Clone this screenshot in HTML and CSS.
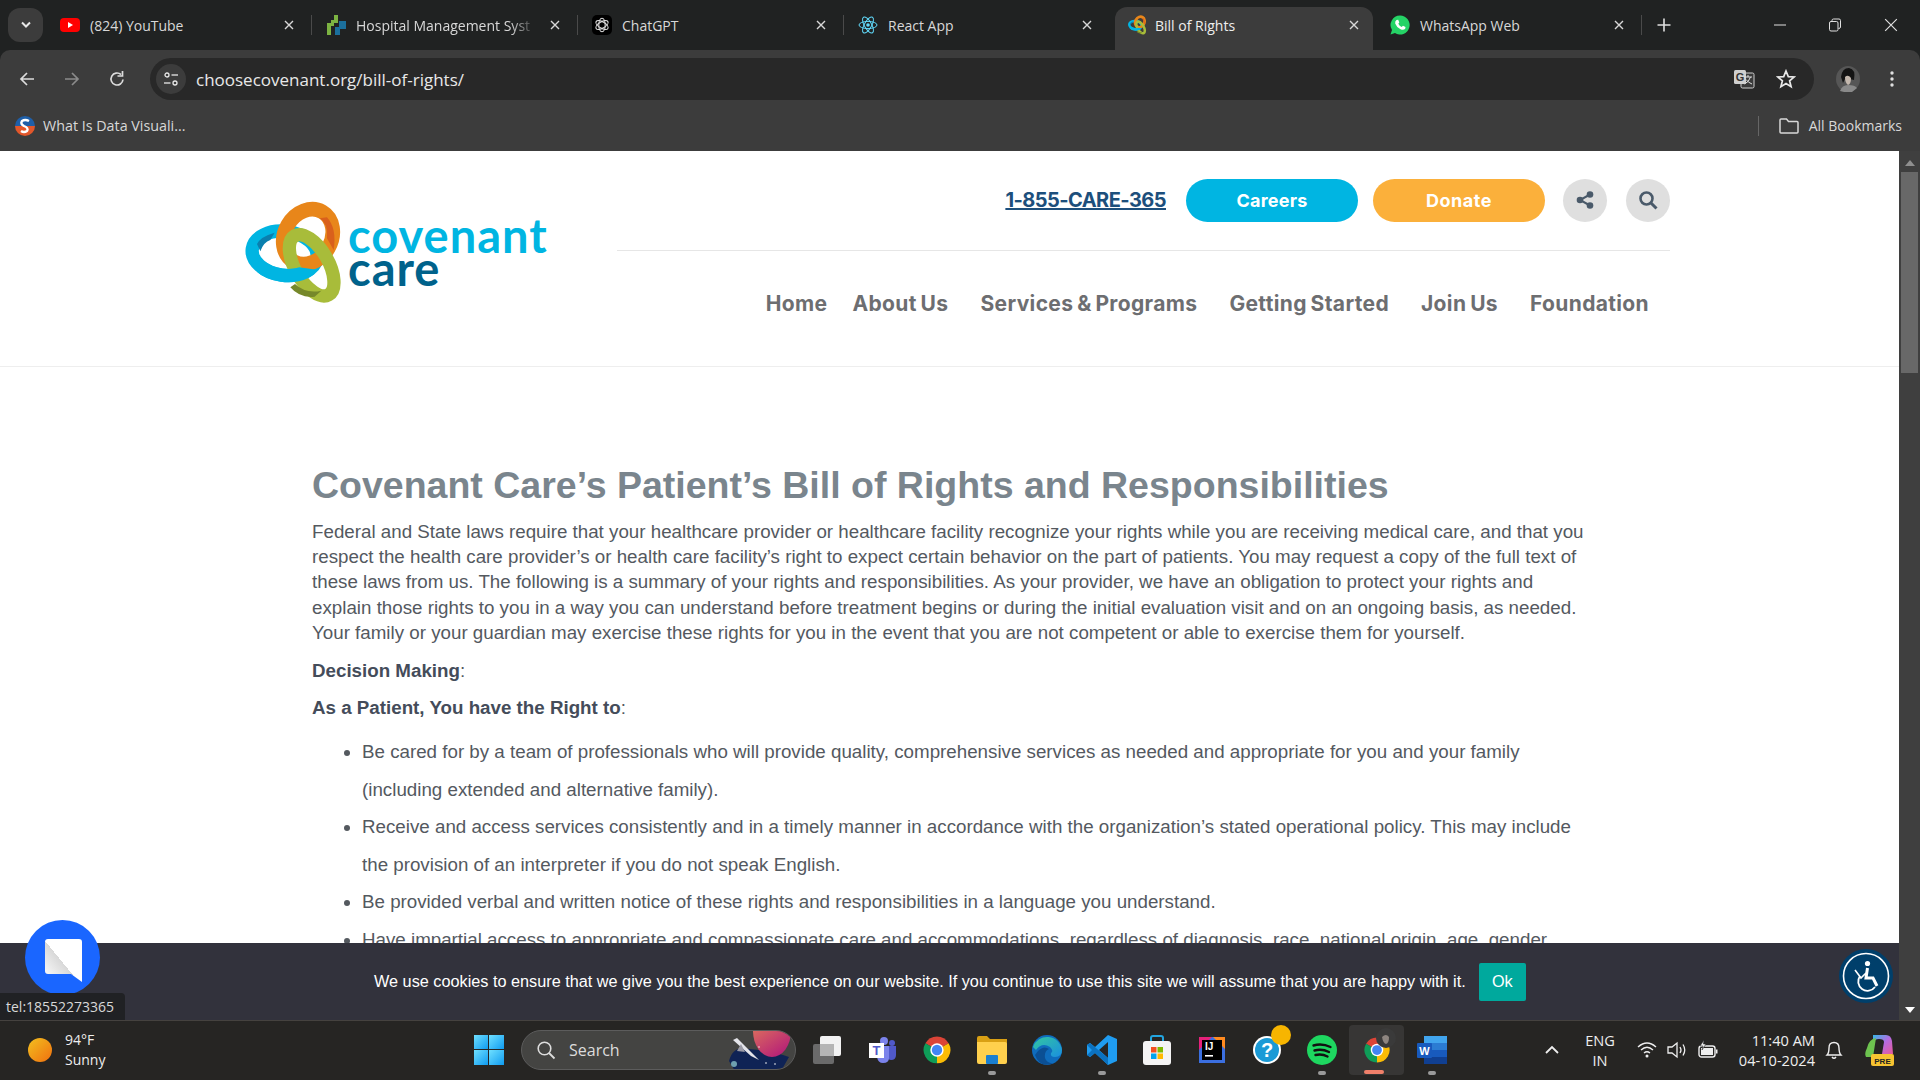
FILE: index.html
```html
<!DOCTYPE html>
<html>
<head>
    <meta charset="utf-8">
    <title>Bill of Rights</title>
    <link rel="stylesheet" href="styles.css">
</head>
<body>

<svg class="defs" width="0" height="0">
    <defs>
        <clipPath id="blue-over"><rect x="120" y="285" width="172" height="80"/></clipPath>
    </defs>
    <symbol id="rings" viewBox="70 90 300 315">
        <ellipse cx="195" cy="250" rx="98" ry="66" transform="rotate(8 195 250)" fill="none" stroke="#00b5e2" stroke-width="40"/>
        <path d="M112 222 Q122 200 165 188 L152 210 Q132 216 122 244Z" fill="#0a7fae"/>
        <ellipse cx="265" cy="200" rx="70" ry="86" transform="rotate(30 265 200)" fill="none" stroke="#e8861a" stroke-width="44"/>
        <path d="M300 145 Q326 160 322 205 L342 240 Q352 175 322 142Z" fill="#d9601c"/>
        <ellipse cx="276" cy="286" rx="50" ry="102" transform="rotate(-30 276 286)" fill="none" stroke="#a8bc3a" stroke-width="40"/>
        <path d="M226 342 Q258 372 305 362 L285 380 Q240 385 212 352Z" fill="#76882a"/>
        <ellipse cx="195" cy="250" rx="98" ry="66" transform="rotate(8 195 250)" fill="none" stroke="#00b5e2" stroke-width="40" clip-path="url(#blue-over)"/>
    </symbol>
    <symbol id="chrome-logo" viewBox="0 0 24 24">
        <path d="M12 12 L3.3 7 A10 10 0 0 1 20.7 7Z" fill="#db4437"/>
        <path d="M12 12 L20.7 7 A10 10 0 0 1 12 22Z" fill="#fbbc05"/>
        <path d="M12 12 L12 22 A10 10 0 0 1 3.3 7Z" fill="#0f9d58"/>
        <circle cx="12" cy="12" r="5" fill="#fff"/>
        <circle cx="12" cy="12" r="3.9" fill="#4285f4"/>
    </symbol>
    <symbol id="close-x" viewBox="0 0 12 12">
        <path d="M2 2 L10 10 M10 2 L2 10" stroke="#d8d8d8" stroke-width="1.4" fill="none"/>
    </symbol>
</svg>

<div class="browser-top">
    <div class="tabstrip">
        <div class="tab-list-btn">
            <svg width="12" height="8" viewBox="0 0 12 8"><path d="M2 1.5 L6 5.5 L10 1.5" stroke="#e8e8e8" stroke-width="2" fill="none"/></svg>
        </div>
        <div class="tab sep">
            <svg class="favicon" viewBox="0 0 20 20"><rect y="3" width="20" height="14" rx="4" fill="#f00"/><path d="M8 7 L13 10 L8 13Z" fill="#fff"/></svg>
            <span class="tab-title">(824) YouTube</span>
            <svg class="tab-close"><use href="#close-x"/></svg>
        </div>
        <div class="tab sep">
            <svg class="favicon" viewBox="0 0 20 20"><path d="M5 5 H8 V0 H12 V8 H8 V11 H5 V20 H1 V8 H5Z" fill="#7cb342"/><path d="M13 6 H20 V14 H14 V20 H9 V12 H13Z" fill="#1b6f9c"/></svg>
            <span class="tab-title fade">Hospital Management Syst</span>
            <svg class="tab-close"><use href="#close-x"/></svg>
        </div>
        <div class="tab sep">
            <svg class="favicon" viewBox="0 0 20 20"><rect width="20" height="20" rx="5" fill="#000"/><g fill="none" stroke="#ddd" stroke-width="1.1"><ellipse cx="10" cy="10" rx="3.2" ry="6.8"/><ellipse cx="10" cy="10" rx="3.2" ry="6.8" transform="rotate(60 10 10)"/><ellipse cx="10" cy="10" rx="3.2" ry="6.8" transform="rotate(120 10 10)"/></g></svg>
            <span class="tab-title">ChatGPT</span>
            <svg class="tab-close"><use href="#close-x"/></svg>
        </div>
        <div class="tab">
            <svg class="favicon" viewBox="0 0 20 20"><g fill="none" stroke="#61dafb" stroke-width="1"><ellipse cx="10" cy="10" rx="9" ry="3.6"/><ellipse cx="10" cy="10" rx="9" ry="3.6" transform="rotate(60 10 10)"/><ellipse cx="10" cy="10" rx="9" ry="3.6" transform="rotate(120 10 10)"/></g><circle cx="10" cy="10" r="1.8" fill="#61dafb"/></svg>
            <span class="tab-title">React App</span>
            <svg class="tab-close"><use href="#close-x"/></svg>
        </div>
        <div class="tab active">
            <svg class="favicon"><use href="#rings"/></svg>
            <span class="tab-title">Bill of Rights</span>
            <svg class="tab-close"><use href="#close-x"/></svg>
        </div>
        <div class="tab sep">
            <svg class="favicon" viewBox="0 0 20 20"><path d="M10 0.5 A9.5 9.5 0 1 1 5 18 L0.5 19.5 L2 15 A9.5 9.5 0 0 1 10 0.5Z" fill="#25d366"/><path d="M6.5 5 L8.2 4.8 L9.3 7.5 L8.3 8.8 Q9.5 11 11.6 12 L13 10.8 L15.5 12 L15.2 13.8 Q13.5 15.6 10.5 14.2 Q6.6 12.4 5.2 8.4 Q4.8 6.4 6.5 5Z" fill="#fff"/></svg>
            <span class="tab-title">WhatsApp Web</span>
            <svg class="tab-close"><use href="#close-x"/></svg>
        </div>
        <div class="new-tab">
            <svg width="14" height="14" viewBox="0 0 14 14"><path d="M7 0.5 V13.5 M0.5 7 H13.5" stroke="#e0e0e0" stroke-width="1.6"/></svg>
        </div>
        <div class="win-btns">
            <svg width="12" height="12" viewBox="0 0 12 12"><path d="M0 6 H12" stroke="#e0e0e0"/></svg>
            <svg width="14" height="14" viewBox="0 0 14 14"><rect x="1.5" y="3.5" width="8.5" height="9.5" rx="1.5" fill="none" stroke="#e0e0e0"/><path d="M4 3.5 V2.5 Q4 1 5.5 1 H11 Q12.5 1 12.5 2.5 V9 Q12.5 10.5 10.5 10.5" fill="none" stroke="#e0e0e0"/></svg>
            <svg width="14" height="14" viewBox="0 0 12 12"><path d="M1 1 L11 11 M11 1 L1 11" stroke="#e0e0e0"/></svg>
        </div>
    </div>

    <div class="toolbar">
        <div class="nav-btns">
            <svg width="18" height="18" viewBox="0 0 18 18"><path d="M16 9 H3 M9 3 L3 9 L9 15" stroke="#dcdcdc" stroke-width="1.7" fill="none"/></svg>
            <svg width="18" height="18" viewBox="0 0 18 18"><path d="M2 9 H15 M9 3 L15 9 L9 15" stroke="#8b8b8b" stroke-width="1.7" fill="none"/></svg>
            <svg width="18" height="18" viewBox="0 0 18 18"><path d="M15 9.5 A6 6 0 1 1 13 4.5" stroke="#dcdcdc" stroke-width="1.7" fill="none"/><path d="M14.5 1 V6 H9.5" stroke="#dcdcdc" stroke-width="1.7" fill="none"/></svg>
        </div>
        <div class="omnibox">
            <div class="site-info">
                <svg width="16" height="16" viewBox="0 0 16 16"><g stroke="#e8e8e8" stroke-width="1.3" fill="none"><circle cx="4" cy="4" r="2"/><path d="M8.5 4 H15"/><circle cx="12" cy="12" r="2"/><path d="M1 12 H7.5"/></g></svg>
            </div>
            <span class="url">choosecovenant.org/bill-of-rights/</span>
            <svg class="omni-icon" width="22" height="22" viewBox="0 0 22 22"><rect x="8" y="5" width="13" height="15" rx="1.5" fill="#3a3a3a" stroke="#cfcfcf"/><rect x="1" y="2" width="12" height="14" rx="1.5" fill="#cfcfcf"/><text x="7" y="13" class="g-letter">G</text><path d="M11 9 H19 M15 7 V9 M17.5 9 Q16 14 11.5 16 M13 11.5 Q15 14.5 19 16" stroke="#e0e0e0" fill="none"/></svg>
            <svg class="omni-icon" width="20" height="20" viewBox="0 0 20 20"><path d="M10 2 L12.3 7.6 L18.2 8 L13.6 11.8 L15.1 17.7 L10 14.5 L4.9 17.7 L6.4 11.8 L1.8 8 L7.7 7.6Z" fill="none" stroke="#e8e8e8" stroke-width="1.7"/></svg>
        </div>
        <svg class="avatar" viewBox="0 0 24 26"><ellipse cx="12" cy="13" rx="12" ry="13" fill="#565656"/><path d="M5 11 Q6 2 13 2 Q20 3 18 14 L14 13 Q11 9 9 13 L7 17Z" fill="#141414"/><path d="M9 11 Q12 8 15 12 Q15 18 12 19 Q9 17 9 11Z" fill="#c4b8ae"/><path d="M4 25 Q6 19 12 19 Q19 19 21 22 L16 26 H8Z" fill="#8a8a8a"/></svg>
        <svg class="menu-dots" width="4" height="18" viewBox="0 0 4 18"><circle cx="2" cy="3" r="1.7" fill="#e0e0e0"/><circle cx="2" cy="9" r="1.7" fill="#e0e0e0"/><circle cx="2" cy="15" r="1.7" fill="#e0e0e0"/></svg>
    </div>

    <div class="bookmarks">
        <svg class="favicon" viewBox="0 0 20 20"><path d="M10 0 A10 10 0 0 1 20 10 H0 A10 10 0 0 1 10 0Z" fill="#1f5fa8"/><path d="M0 10 H20 A10 10 0 0 1 0 10Z" fill="#e2572b"/><path d="M14 5 Q10 3 7 5 Q5 8 9 10 Q14 12 12 15 Q9 17 6 15" fill="none" stroke="#fff" stroke-width="2.4"/></svg>
        <span class="bm-title bm-first">What Is Data Visuali...</span>
        <div class="bm-right">
            <svg width="20" height="16" viewBox="0 0 20 16"><path d="M1 14 V2 Q1 1 2 1 H7.5 L9.5 3.5 H18 Q19 3.5 19 4.5 V14 Q19 15 18 15 H2 Q1 15 1 14Z" fill="none" stroke="#d8d8d8" stroke-width="1.5"/></svg>
            <span class="bm-title">All Bookmarks</span>
        </div>
    </div>
</div>

<div class="viewport">
    <div class="page">
        <header class="site-header">
            <div class="logo">
                <svg class="logo-rings"><use href="#rings"/></svg>
                <div class="logo-text">
                    <div class="logo-covenant">covenant</div>
                    <div class="logo-care">care</div>
                </div>
            </div>
            <div class="header-right">
                <div class="header-actions">
                    <a class="phone">1-855-CARE-365</a>
                    <a class="pill careers">Careers</a>
                    <a class="pill donate">Donate</a>
                    <div class="round-btn">
                        <svg width="20" height="20" viewBox="0 0 20 20"><g fill="#4a5a6a"><circle cx="15" cy="4.5" r="3.3"/><circle cx="15" cy="15.5" r="3.3"/><circle cx="5" cy="10" r="3.3"/></g><path d="M15 4.5 L5 10 L15 15.5" stroke="#4a5a6a" stroke-width="2" fill="none"/></svg>
                    </div>
                    <div class="round-btn">
                        <svg width="20" height="20" viewBox="0 0 20 20"><circle cx="8.5" cy="8.5" r="6" fill="none" stroke="#4a5a6a" stroke-width="2.6"/><path d="M13 13 L18.5 18.5" stroke="#4a5a6a" stroke-width="3"/></svg>
                    </div>
                </div>
                <nav class="main-nav">
                    <a class="nav-home">Home</a>
                    <a class="nav-about">About Us</a>
                    <a class="nav-services">Services &amp; Programs</a>
                    <a class="nav-started">Getting Started</a>
                    <a class="nav-join">Join Us</a>
                    <a>Foundation</a>
                </nav>
            </div>
        </header>

        <article class="rights">
            <h1>Covenant Care’s Patient’s Bill of Rights and Responsibilities</h1>
            <p>Federal and State laws require that your healthcare provider or healthcare facility recognize your rights while you are receiving medical care, and that you respect the health care provider’s or health care facility’s right to expect certain behavior on the part of patients. You may request a copy of the full text of these laws from us. The following is a summary of your rights and responsibilities. As your provider, we have an obligation to protect your rights and explain those rights to you in a way you can understand before treatment begins or during the initial evaluation visit and on an ongoing basis, as needed. Your family or your guardian may exercise these rights for you in the event that you are not competent or able to exercise them for yourself.</p>
            <p><strong>Decision Making</strong>:</p>
            <p><strong>As a Patient, You have the Right to</strong>:</p>
            <ul>
                <li>Be cared for by a team of professionals who will provide quality, comprehensive services as needed and appropriate for you and your family (including extended and alternative family).</li>
                <li>Receive and access services consistently and in a timely manner in accordance with the organization’s stated operational policy. This may include the provision of an interpreter if you do not speak English.</li>
                <li>Be provided verbal and written notice of these rights and responsibilities in a language you understand.</li>
                <li>Have impartial access to appropriate and compassionate care and accommodations, regardless of diagnosis, race, national origin, age, gender</li>
            </ul>
        </article>
    </div>
    <div class="scrollbar">
        <svg width="10" height="6" viewBox="0 0 10 6"><path d="M5 0 L10 6 H0Z" fill="#8f8f8f"/></svg>
        <div class="thumb"></div>
        <svg class="scroll-down" width="10" height="6" viewBox="0 0 10 6"><path d="M0 0 H10 L5 6Z" fill="#fff"/></svg>
    </div>

    <div class="cookie-bar">
        <span>We use cookies to ensure that we give you the best experience on our website. If you continue to use this site we will assume that you are happy with it.</span>
        <a class="cookie-ok">Ok</a>
    </div>
    <div class="a11y-btn">
        <svg width="54" height="54" viewBox="0 0 54 54"><circle cx="27" cy="27" r="27" fill="#003f6b"/><circle cx="27" cy="27" r="22.5" fill="none" stroke="#fff" stroke-width="1.6"/><circle cx="28.5" cy="14.5" r="2.6" fill="#fff"/><path d="M28.5 19 L27 29 H34 L38 37" fill="none" stroke="#fff" stroke-width="3"/><path d="M21 27 A9 9 0 1 0 36 38" fill="none" stroke="#fff" stroke-width="1.8"/><path d="M16 21 L22 29 L27 24" fill="none" stroke="#fff" stroke-width="1.6"/></svg>
    </div>
    <div class="chat-btn">
        <svg width="37" height="43" viewBox="0 0 37 43"><defs><linearGradient id="bubble" gradientUnits="userSpaceOnUse" x1="0" y1="35" x2="32.4" y2="8.4"><stop offset="0" stop-color="#f8f8f8"/><stop offset=".5" stop-color="#d8d8d8"/><stop offset=".5" stop-color="#fff"/><stop offset="1" stop-color="#fff"/></linearGradient></defs><path d="M3 0 H34 Q37 0 37 3 V43 L26 35 H3 Q0 35 0 32 V3 Q0 0 3 0Z" fill="url(#bubble)"/></svg>
    </div>
    <div class="status-url">tel:18552273365</div>
</div>

<div class="taskbar">
    <div class="weather">
        <span class="sun"></span>
        <div class="weather-text"><div>94°F</div><div>Sunny</div></div>
    </div>
    <div class="task-center">
        <div class="task-item">
            <div class="win-logo"><i></i><i></i><i></i><i></i></div>
        </div>
        <div class="search-pill">
            <svg width="20" height="20" viewBox="0 0 20 20"><circle cx="8.5" cy="8.5" r="6.3" fill="none" stroke="#ddd" stroke-width="1.6"/><path d="M13 13 L18.5 18.5" stroke="#ddd" stroke-width="1.8"/></svg>
            <span>Search</span>
            <svg class="search-art" width="66" height="40" viewBox="0 0 66 40"><defs><linearGradient id="planet" x1="0" y1="0" x2="1" y2="1"><stop offset="0" stop-color="#d9685f"/><stop offset="1" stop-color="#b0127c"/></linearGradient></defs><path d="M0 30 Q4 14 20 18 Q44 20 60 26 L52 40 H6Z" fill="#0f2355"/><path d="M24 0 H62 A19 26 0 0 1 24 0Z" fill="url(#planet)"/><path d="M4 9 L8 7 L30 29 L22 25Z" fill="#e4e4ea"/><path d="M8 20 L16 21 L12 13Z" fill="#9a9aa6"/><circle cx="5" cy="33" r="3" fill="#6ea0b0"/><g fill="#fff"><circle cx="37" cy="32" r=".8"/><circle cx="46" cy="33" r=".8"/><circle cx="30" cy="16" r=".7"/></g></svg>
        </div>
        <div class="task-item">
            <svg width="30" height="30" viewBox="0 0 30 30"><rect x="1" y="9" width="21" height="20" rx="2" fill="#6a6a6a"/><rect x="8" y="1" width="21" height="20" rx="2" fill="#f2f2f2"/><rect x="8" y="9" width="14" height="12" fill="#b5b5b5"/></svg>
        </div>
        <div class="task-item">
            <svg width="28" height="28" viewBox="0 0 28 28"><circle cx="16" cy="5" r="4" fill="#7b83eb"/><circle cx="24" cy="7" r="3" fill="#5059c9"/><path d="M20 10 H28 V19 Q28 24 23 24 Q22 24 20 23Z" fill="#5059c9"/><path d="M9 10 H21 V22 Q21 27 15 27 Q10 27 9 21Z" fill="#7b83eb"/><rect x="1" y="7" width="15" height="15" fill="#fff"/><text x="8.5" y="19" class="teams-t">T</text></svg>
        </div>
        <div class="task-item">
            <svg width="32" height="32"><use href="#chrome-logo"/></svg>
        </div>
        <div class="task-item dot">
            <svg width="30" height="28" viewBox="0 0 30 28"><path d="M0 2 Q0 0 2 0 H10 L13 3 H30 V10 H0Z" fill="#d9a014"/><path d="M0 6 H28 Q30 6 30 8 V26 Q30 28 28 28 H2 Q0 28 0 26Z" fill="#ffd04d"/><rect x="9" y="19" width="12" height="9" rx="1" fill="#1a7fd0"/></svg>
        </div>
        <div class="task-item">
            <svg width="30" height="30" viewBox="0 0 30 30"><defs><linearGradient id="edge" x1="0" y1="0" x2="1" y2="1"><stop offset="0" stop-color="#33c6a0"/><stop offset="1" stop-color="#1a8fe0"/></linearGradient></defs><circle cx="15" cy="15" r="15" fill="#0f6cbd"/><path d="M1 12 A15 15 0 0 1 30 15 Q30 22 23 22 Q18 22 19 18 Q22 16 18 12 Q10 7 4 15Z" fill="url(#edge)"/><path d="M6 16 Q12 10 17 14 Q12 16 13 23 Q15 29 22 28 Q8 34 3 20Z" fill="#0b4f94"/></svg>
        </div>
        <div class="task-item dot">
            <svg width="30" height="30" viewBox="0 0 30 30"><path d="M21 0 L30 4 V26 L21 30 L8 18 L3 22 L0 20 V10 L3 8 L8 12Z" fill="#1f9cf0"/><path d="M21 7 L12 15 L21 23Z" fill="#262626"/><path d="M0 10 L3 8 L21 23 V30 L8 18 L3 22 L0 20 L5 15Z" fill="#0b72c0"/></svg>
        </div>
        <div class="task-item">
            <svg width="30" height="30" viewBox="0 0 30 30"><path d="M9 7 V3 Q9 1 11 1 H19 Q21 1 21 3 V7" fill="none" stroke="#22a5e0" stroke-width="2"/><rect x="1" y="6" width="28" height="24" rx="3" fill="#f4f4f4"/><rect x="9" y="12" width="5.5" height="5.5" fill="#f25022"/><rect x="15.5" y="12" width="5.5" height="5.5" fill="#7fba00"/><rect x="9" y="18.5" width="5.5" height="5.5" fill="#00a4ef"/><rect x="15.5" y="18.5" width="5.5" height="5.5" fill="#ffb900"/></svg>
        </div>
        <div class="task-item">
            <svg width="26" height="26" viewBox="0 0 26 26"><rect width="26" height="26" fill="#3b6fe0"/><path d="M0 0 H13 L0 13Z" fill="#e6217a"/><path d="M26 0 V12 L14 0Z" fill="#ff8a1f"/><rect x="3" y="3" width="20" height="20" fill="#000"/><text x="6" y="13" class="ij-text">IJ</text><rect x="6" y="18" width="8" height="1.6" fill="#fff"/></svg>
        </div>
        <div class="task-item help-item">
            <svg width="30" height="30" viewBox="0 0 30 30"><circle cx="15" cy="15" r="14" fill="#fff"/><circle cx="15" cy="15" r="12" fill="#1a9ad6"/><text x="15" y="22" class="help-q">?</text></svg>
            <span class="help-badge"></span>
        </div>
        <div class="task-item dot">
            <svg width="30" height="30" viewBox="0 0 30 30"><circle cx="15" cy="15" r="15" fill="#1ed760"/><path d="M6.5 10.5 Q15 8 23.5 12 M7.5 15.5 Q15 13.5 22 17 M8.5 20 Q15 18.5 20.5 21.5" fill="none" stroke="#111" stroke-width="2.4" stroke-linecap="round"/></svg>
        </div>
        <div class="task-item active-app">
            <svg width="30" height="30"><use href="#chrome-logo"/></svg>
            <svg class="app-avatar" width="20" height="20" viewBox="0 0 20 20"><circle cx="10" cy="10" r="10" fill="#3a3a3a"/><path d="M6 9 Q10 5 13 9 Q13 15 10 16 Q7 15 6 9Z" fill="#8d8580"/></svg>
        </div>
        <div class="task-item dot">
            <svg width="30" height="30" viewBox="0 0 30 30"><rect x="7" y="1" width="23" height="7" fill="#41a5ee"/><rect x="7" y="8" width="23" height="7" fill="#2b7cd3"/><rect x="7" y="15" width="23" height="7" fill="#185abd"/><rect x="7" y="22" width="23" height="7" fill="#103f91"/><rect x="0" y="8" width="15" height="15" rx="1" fill="#185abd"/><text x="7.5" y="20" class="word-w">W</text></svg>
        </div>
    </div>
    <div class="tray">
        <svg class="tray-chevron" width="14" height="9" viewBox="0 0 14 9"><path d="M1 8 L7 2 L13 8" fill="none" stroke="#eee" stroke-width="1.8"/></svg>
        <div class="lang"><div>ENG</div><div>IN</div></div>
        <svg width="20" height="18" viewBox="0 0 20 18"><g fill="none" stroke="#eee" stroke-width="1.4"><path d="M1 6 Q10 -2 19 6"/><path d="M4 9 Q10 3.5 16 9"/><path d="M7 12 Q10 9.5 13 12"/></g><circle cx="10" cy="15" r="1.5" fill="#eee"/></svg>
        <svg width="21" height="18" viewBox="0 0 21 18"><path d="M1 6 H5 L10 2 V16 L5 12 H1Z" fill="none" stroke="#eee" stroke-width="1.3"/><g fill="none" stroke="#eee" stroke-width="1.3"><path d="M13 6 Q15 9 13 12"/><path d="M16 3.5 Q19.5 9 16 14.5"/></g></svg>
        <svg width="20" height="20" viewBox="0 0 20 20"><rect x="1" y="6" width="16" height="11" rx="2.5" fill="none" stroke="#eee" stroke-width="1.4"/><rect x="3" y="8" width="12" height="7" fill="#eee"/><rect x="18" y="9.5" width="1.5" height="4" fill="#eee"/><path d="M6 0 L2 6 H5 L4 10 L8 4 H5.5Z" fill="#eee" stroke="#222" stroke-width=".6"/></svg>
        <div class="clock"><div>11:40 AM</div><div>04-10-2024</div></div>
        <svg class="bell" width="18" height="20" viewBox="0 0 18 20"><path d="M2 15 Q4 13 4 8 Q4 2.5 9 2.5 Q14 2.5 14 8 Q14 13 16 15Z M7 17 Q9 19.5 11 17" fill="none" stroke="#eee" stroke-width="1.4"/></svg>
        <svg class="copilot" width="30" height="32" viewBox="0 0 30 32"><defs><linearGradient id="cop" x1="0" y1="0" x2="1" y2="1"><stop offset="0" stop-color="#35b8e8"/><stop offset=".5" stop-color="#b66be0"/><stop offset="1" stop-color="#e85a9a"/></linearGradient></defs><path d="M9 1 H22 Q27 1 28 7 L29 20 H18 L20 8 Q20 5 15 5 Q10 5 9 10Z" fill="url(#cop)"/><path d="M3 14 Q5 5 12 4 L9 23 H2 Q0 20 3 14Z" fill="#6dc34f"/><rect x="7" y="20" width="23" height="12" rx="2" fill="#f7c331"/><text x="18.5" y="29.5" class="pre-text">PRE</text></svg>
    </div>
</div>

</body>
</html>
```

FILE: styles.css
```css
* {
    box-sizing: border-box;
}

html, body {
    margin: 0;
    height: 100%;
    overflow: hidden;
}

body {
    display: flex;
    flex-direction: column;
    height: 1080px;
    font-family: "Open Sans", "Liberation Sans", sans-serif;
}

.defs {
    position: absolute;
}

/* browser chrome */
.browser-top {
    flex: none;
    color: #d8d8d8;
    background: #202222;
}

.tabstrip {
    display: flex;
    height: 50px;
    padding-left: 8px;
    align-items: stretch;
}

.tab-list-btn {
    width: 35px;
    height: 34px;
    margin-top: 8px;
    margin-right: 3px;
    display: flex;
    align-items: center;
    justify-content: center;
    background: #3c3c3c;
    border-radius: 12px;
}

.tab {
    position: relative;
    width: 266px;
    height: 50px;
    display: flex;
    align-items: center;
    padding-left: 14px;
    font-size: 14px;
}

.tab.sep::after {
    content: "";
    position: absolute;
    right: 0;
    top: 15px;
    height: 20px;
    width: 1px;
    background: #4a4a4a;
}

.tab.active {
    margin-top: 7px;
    height: 43px;
    margin-left: 5px;
    margin-right: 3px;
    width: 258px;
    padding-left: 12px;
    padding-bottom: 7px;
    background: #3c3c3c;
    border-radius: 12px 12px 0 0;
    color: #eee;
}

.favicon {
    width: 20px;
    height: 20px;
    flex: none;
}

.tab-title {
    margin-left: 10px;
    width: 181px;
    white-space: nowrap;
}

.tab.active .tab-title {
    margin-left: 8px;
}

.tab-title.fade {
    -webkit-mask-image: linear-gradient(to right, #000 85%, transparent);
    mask-image: linear-gradient(to right, #000 85%, transparent);
}

.tab-close {
    width: 12px;
    height: 12px;
    flex: none;
    margin-left: 12px;
}

.new-tab {
    width: 44px;
    display: flex;
    align-items: center;
    justify-content: center;
}

.win-btns {
    display: flex;
    margin-left: auto;
    align-items: center;
    gap: 42px;
    padding-right: 22px;
}

.toolbar {
    height: 50px;
    display: flex;
    align-items: center;
    background: #3c3c3c;
    border-radius: 10px 10px 0 0;
}

.nav-btns {
    width: 150px;
    margin-top: 8px;
    display: flex;
    gap: 27px;
    padding-left: 18px;
}

.omnibox {
    width: 1664px;
    height: 42px;
    margin-top: 8px;
    display: flex;
    align-items: center;
    gap: 21px;
    padding: 0 18px 0 6px;
    background: #282828;
    border-radius: 21px;
}

.site-info {
    width: 30px;
    height: 30px;
    display: flex;
    align-items: center;
    justify-content: center;
    flex: none;
    border-radius: 50%;
    background: #3c3c3c;
}

.url {
    flex: 1;
    margin-left: -11px;
    font-size: 17px;
    color: #e8e8e8;
}

.g-letter {
    font-family: "Liberation Sans", sans-serif;
    font-size: 11px;
    font-weight: bold;
    fill: #333;
    text-anchor: middle;
}

.avatar {
    width: 24px;
    height: 26px;
    margin-top: 8px;
    margin-left: 22px;
}

.menu-dots {
    margin-top: 8px;
    margin-left: 30px;
}

.bookmarks {
    height: 51px;
    display: flex;
    align-items: center;
    padding-left: 15px;
    background: #3c3c3c;
    font-size: 14px;
}

.bm-title {
    margin-left: 7px;
    white-space: nowrap;
}

.bm-first {
    margin-left: 8px;
    font-size: 14.3px;
}

.bm-right {
    display: flex;
    align-items: center;
    margin-left: auto;
    padding-right: 18px;
    padding-left: 21px;
    position: relative;
    gap: 3px;
}

.bm-right::before {
    content: "";
    position: absolute;
    left: 0;
    top: 0;
    width: 1px;
    height: 20px;
    background: #666;
}

/* web page */
.viewport {
    position: relative;
    flex: none;
    height: 869px;
    display: flex;
    overflow: hidden;
    background: #fff;
}

.page {
    flex: 1;
    min-width: 0;
    overflow: hidden;
}

.site-header {
    display: flex;
    height: 216px;
    border-bottom: 1px solid #eee;
}

.logo {
    width: 617px;
    padding-left: 243px;
    padding-top: 49px;
    display: flex;
    align-items: flex-start;
}

.logo-rings {
    width: 100px;
    height: 105px;
    flex: none;
}

.logo-text {
    font-family: Lato, sans-serif;
    font-size: 47px;
    font-weight: 700;
    letter-spacing: 1px;
    line-height: 33px;
    margin-left: 5px;
    padding-top: 19px;
}

.logo-covenant {
    color: #00b5e2;
}

.logo-care {
    color: #00628b;
}

.header-right {
    width: 1053px;
}

.header-actions {
    height: 100px;
    padding-top: 28px;
    padding-bottom: 29px;
    display: flex;
    align-items: center;
    justify-content: flex-end;
    border-bottom: 1px solid #e6e6e6;
    font-family: Inter, "Liberation Sans", sans-serif;
}

.phone {
    font-size: 20px;
    font-weight: 700;
    color: #1d4f7c;
    text-decoration: underline;
    letter-spacing: -0.55px;
    margin-right: 20px;
}

.pill {
    width: 172px;
    height: 43px;
    display: flex;
    align-items: center;
    justify-content: center;
    margin-right: 15px;
    border-radius: 22px;
    font-size: 18px;
    font-weight: 700;
    letter-spacing: 0.2px;
    color: #fff;
}

.careers {
    background: #00b5e2;
}

.donate {
    background: #fbb03b;
    margin-right: 18px;
    letter-spacing: 0.5px;
}

.round-btn {
    width: 44px;
    height: 43px;
    display: flex;
    align-items: center;
    justify-content: center;
    border-radius: 50%;
    background: #dfdfdf;
}

.round-btn + .round-btn {
    margin-left: 19px;
}

.main-nav {
    display: flex;
    justify-content: flex-end;
    padding-top: 40px;
    padding-right: 21px;
    font-family: Inter, "Liberation Sans", sans-serif;
    font-size: 21px;
    font-weight: 700;
    color: #6d6e71;
    letter-spacing: 0.35px;
    word-spacing: -1.5px;
}

.nav-home {
    margin-right: 25px;
}

.nav-about, .nav-services, .nav-started, .nav-join {
    margin-right: 32px;
}

/* article */
.rights {
    padding: 93px 0 0 312px;
    width: 1592px;
    font-family: "Liberation Sans", Arial, sans-serif;
    font-size: 18.75px;
    line-height: 25.2px;
    color: #54595f;
}

.rights h1 {
    margin: 0 0 9px;
    font-size: 37.5px;
    line-height: 50px;
    font-weight: 700;
    color: #7a858d;
}

.rights p {
    margin: 0 0 12.5px;
}

.rights strong {
    color: #444c5a;
}

.rights ul {
    margin: 0;
    padding-left: 50px;
    line-height: 37.6px;
}

.scrollbar {
    flex: none;
    width: 21px;
    position: relative;
    display: flex;
    flex-direction: column;
    align-items: center;
    padding-top: 9px;
    background: #3f3f3f;
}

.thumb {
    width: 17px;
    height: 201px;
    margin-top: 6px;
    background: #686868;
}

.scroll-down {
    position: absolute;
    bottom: 7px;
}

.cookie-bar {
    position: absolute;
    left: 0;
    right: 21px;
    bottom: 0;
    height: 77px;
    display: flex;
    align-items: center;
    padding-left: 374px;
    gap: 13px;
    background: #32323c;
    color: #fff;
    font-family: "Liberation Sans", sans-serif;
    font-size: 16.25px;
}

.cookie-ok {
    width: 47px;
    height: 38px;
    display: flex;
    align-items: center;
    justify-content: center;
    background: #00a99d;
    border-radius: 2px;
}

.a11y-btn {
    position: absolute;
    left: 1839px;
    top: 798px;
    width: 54px;
    height: 54px;
}

.chat-btn {
    position: absolute;
    left: 25px;
    top: 769px;
    width: 75px;
    height: 75px;
    display: flex;
    align-items: center;
    justify-content: center;
    padding-top: 5px;
    padding-left: 1px;
    border-radius: 50%;
    background: #1a66ff;
}

.status-url {
    position: absolute;
    left: 0;
    bottom: 0;
    width: 125px;
    height: 27px;
    line-height: 27px;
    padding-left: 6px;
    background: #202124;
    color: #d8d8d8;
    font-size: 14px;
    border-radius: 0 4px 0 0;
    white-space: nowrap;
}

/* windows taskbar */
.taskbar {
    flex: none;
    height: 60px;
    display: flex;
    align-items: center;
    padding-bottom: 2px;
    border-top: 1px solid #45423f;
    background: #262523;
    color: #eee;
    font-size: 14px;
}

.weather {
    width: 461px;
    display: flex;
    align-items: center;
    padding-left: 28px;
    gap: 13px;
}

.sun {
    width: 24px;
    height: 24px;
    border-radius: 50%;
    background: linear-gradient(135deg, #f2c01f, #f0700f);
}

.weather-text {
    line-height: 20px;
    font-size: 14px;
}

.task-center {
    display: flex;
    align-items: center;
}

.task-item {
    position: relative;
    width: 55px;
    height: 50px;
    display: flex;
    align-items: center;
    justify-content: center;
}

.task-item.dot::after {
    content: "";
    position: absolute;
    bottom: 0;
    left: 24px;
    width: 8px;
    height: 4px;
    border-radius: 2px;
    background: #9a9a9a;
}

.active-app {
    background: #373635;
    border-radius: 4px;
}

.active-app::after {
    content: "";
    position: absolute;
    bottom: 1px;
    left: 15px;
    width: 20px;
    height: 4px;
    border-radius: 2px;
    background: #f0806a;
}

.app-avatar {
    position: absolute;
    top: 3px;
    left: 27px;
}

.help-badge {
    position: absolute;
    top: 0;
    right: 3px;
    width: 20px;
    height: 20px;
    border-radius: 50%;
    background: #f7b500;
}

.win-logo {
    width: 30px;
    height: 30px;
    display: grid;
    grid-template-columns: 1fr 1fr;
    gap: 1px;
}

.win-logo i {
    background: linear-gradient(135deg, #6fe0ff, #0f9bf0);
}

.search-pill {
    width: 275px;
    height: 40px;
    margin-left: 5px;
    margin-right: 3px;
    display: flex;
    align-items: center;
    padding-left: 14px;
    gap: 13px;
    border: 1px solid #5c5c5c;
    border-radius: 20px;
    background: #444442;
    color: #dcdcdc;
    font-size: 16px;
    overflow: hidden;
    position: relative;
}

.search-art {
    position: absolute;
    right: 0;
    top: 0;
}

.teams-t, .ij-text, .word-w, .help-q, .pre-text {
    font-family: "Liberation Sans", sans-serif;
    font-weight: bold;
    text-anchor: middle;
}

.teams-t {
    font-size: 13px;
    fill: #5059c9;
}

.ij-text {
    font-size: 10px;
    fill: #fff;
    text-anchor: start;
}

.word-w {
    font-size: 11px;
    fill: #fff;
}

.help-q {
    font-size: 20px;
    fill: #fff;
}

.pre-text {
    font-size: 8px;
    fill: #222;
}

.tray {
    margin-left: auto;
    display: flex;
    align-items: center;
    font-size: 14.6px;
}

.tray-chevron {
    margin-right: 18px;
}

.lang {
    width: 46px;
    text-align: center;
    line-height: 20px;
    margin-right: 14px;
}

.tray > svg + svg {
    margin-left: 10px;
}

.clock {
    width: 84px;
    margin-left: 13px;
    text-align: right;
    line-height: 20px;
}

.tray .bell {
    margin-left: 10px;
}

.tray .copilot {
    margin-left: 21px;
    margin-right: 26px;
}
```
